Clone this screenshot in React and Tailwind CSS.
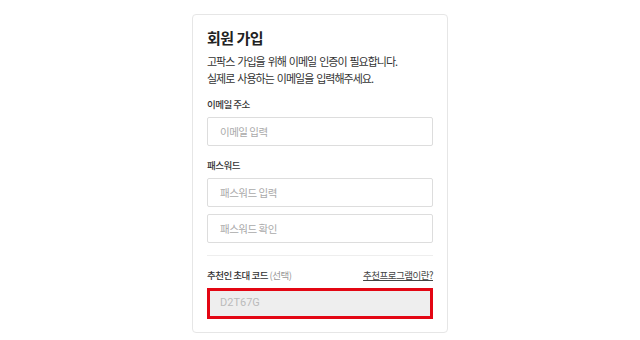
export default function App() {
  return (
    <div className="w-[640px] h-[340px] bg-white flex justify-center overflow-hidden" style={{ fontFamily: '"Noto Sans CJK KR", "Noto Sans", sans-serif' }}>
      <div className="mt-[14px] w-[256px] h-[319px] border border-[#e6e6e6] rounded-[4px] px-[14px] pt-[13px]">
        <h1 className="text-[15px] leading-[20px] font-bold text-[#222] tracking-[-0.5px]">회원 가입</h1>
        <p className="mt-[5px] text-[11px] leading-[17px] text-[#333] tracking-[-1px] [word-spacing:1.5px]">
          고팍스 가입을 위해 이메일 인증이 필요합니다.<br />실제로 사용하는 이메일을 입력해주세요.
        </p>
        <div className="mt-[10px] text-[9.5px] leading-[14px] font-medium text-[#333] tracking-[-0.5px]">이메일 주소</div>
        <div className="mt-[6px] h-[29px] border border-[#ddd] rounded-[2px] flex items-center px-[12px] text-[10.5px] text-[#aaa] tracking-[-0.5px]">이메일 입력</div>
        <div className="mt-[12px] text-[9.5px] leading-[14px] font-medium text-[#333] tracking-[-0.5px]">패스워드</div>
        <div className="mt-[6px] h-[29px] border border-[#ddd] rounded-[2px] flex items-center px-[12px] text-[10.5px] text-[#aaa] tracking-[-0.5px]">패스워드 입력</div>
        <div className="mt-[7px] h-[29px] border border-[#ddd] rounded-[2px] flex items-center px-[12px] text-[10.5px] text-[#aaa] tracking-[-0.5px]">패스워드 확인</div>
        <div className="mt-[12px] border-t border-[#eee]"></div>
        <div className="mt-[12px] flex justify-between items-center text-[9.5px] leading-[14px] tracking-[-0.5px]">
          <span className="font-medium text-[#333]">추천인 초대 코드 <span className="font-normal text-[#999]">(선택)</span></span>
          <span className="text-[#444] underline">추천프로그램이란?</span>
        </div>
        <div className="mt-[6px] h-[31px] border-[3px] border-[#e30613] bg-[#eee] flex items-center px-[10px] text-[11px] text-[#bbb]" style={{ fontFamily: 'Roboto, sans-serif' }}>D2T67G</div>
      </div>
    </div>
  );
}
